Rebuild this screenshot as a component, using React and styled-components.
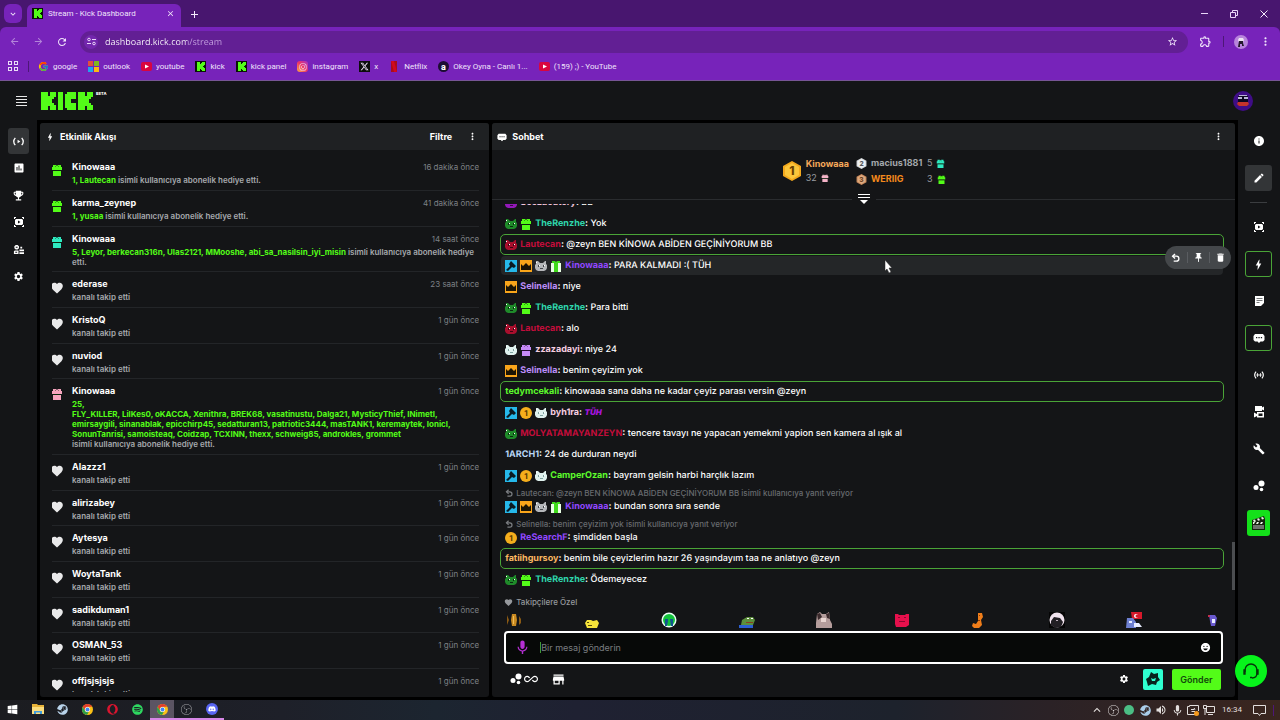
import * as React from 'react'
import styled, { createGlobalStyle, css } from 'styled-components'
import {
	MdAllInclusive,
	MdArrowBack,
	MdArrowForward,
	MdAssessment,
	MdBolt,
	MdBuild,
	MdClose,
	MdDelete,
	MdEdit,
	MdEmojiEmotions,
	MdEmojiEvents,
	MdFavorite,
	MdInfo,
	MdKeyboardArrowDown,
	MdKeyboardArrowUp,
	MdMic,
	MdMoreVert,
	MdOutlineExtension,
	MdPushPin,
	MdRefresh,
	MdSettings,
	MdStarBorder,
	MdStore,
	MdVolumeUp,
} from 'react-icons/md'
import { FaDiscord, FaInstagram, FaOpera, FaSpotify, FaSteam, FaWindows, FaXTwitter } from 'react-icons/fa6'
import { FcGoogle } from 'react-icons/fc'
import { SiObsstudio } from 'react-icons/si'

const GlobalStyle = createGlobalStyle`
	* {
		box-sizing: border-box;
	}
	body {
		margin: 0;
		background: #000;
		font-family: 'Inter', sans-serif;
		color: #fff;
	}
	button {
		padding: 0;
		border: 0;
		background: none;
		color: inherit;
		font-family: inherit;
	}
	a {
		color: inherit;
		text-decoration: none;
	}
	p, h1, h2, h3, ul, ol {
		margin: 0;
		padding: 0;
	}
	ul, ol {
		list-style: none;
	}
	svg {
		display: block;
		flex-shrink: 0;
	}
`

const colors = {
	surface: '#141517',
	raised: '#1f2123',
	green: '#53fc18',
	teal: '#2ee9c0',
	outline: '#4aa437',
}

const noWrap = css`
	white-space: nowrap;
	overflow: hidden;
	text-overflow: ellipsis;
`

const center = css`
	display: flex;
	align-items: center;
	justify-content: center;
`

/**
 * Icons
 */

const Gift = ({ size = 12, color = colors.green, ribbon = 'rgba(0,60,0,0.45)' }) => (
	<svg width={size} height={size} viewBox="0 0 12 12">
		<path fill={color} d="M2 1h3l1 1 1-1h3v2h1v3H1V3h1zM2 7h8v5H2z" />
		<path fill={ribbon} d="M2 6h8v1H2zM4 2h1v1H4zM7 2h1v1H7z" />
	</svg>
)

const BigGift = () => (
	<svg width="12" height="12" viewBox="0 0 12 12">
		<path fill="#e9ffe4" d="M1 3h10v3H1zM1 6h10v6H1z" />
		<path fill="#3fdb1b" d="M2 1h3l1 1 1-1h3v2H8v9H4V3H2z" />
	</svg>
)

const Cat = ({ color, face = '#0b2a10', light = '#ffffff' }) => (
	<svg width="12" height="12" viewBox="0 0 12 12">
		<path fill={color} d="M1 1h2l2 2h3l2-2h1v3l1 1v3l-1 2-2 1H3L1 10 0 8V5l1-1z" />
		<path fill={face} d="M3 5h1v2H3zM8 5h1v2H8zM5 8h3v1H5z" />
		<path fill={light} d="M4 5h1v1H4zM9 5h1v1H9zM1 2h1v1H1z" />
	</svg>
)

const ModBadge = () => (
	<svg width="12" height="12" viewBox="0 0 12 12">
		<path fill="#26b8ea" d="M0 0h12v12H0z" />
		<path fill="#0b1a22" d="M6 1l5 5-2 2-2-1-4 4-2-1 4-4-1-2z" />
	</svg>
)

const CrownBadge = () => (
	<svg width="12" height="12" viewBox="0 0 12 12">
		<path fill="#f9a51a" d="M0 0h12v12H0z" />
		<path fill="#1b1404" d="M1 4l2 2 3-3 3 3 2-2v6H1z" />
	</svg>
)

const CoinBadge = () => (
	<svg width="12" height="12" viewBox="0 0 12 12">
		<circle cx="6" cy="6" r="6" fill="#f5ae1c" />
		<text x="6" y="9" textAnchor="middle" fontSize="8" fontWeight="700" fill="#5a3600">1</text>
	</svg>
)

const RankBadge = ({ size, color, light, dark, rank }) => (
	<svg width={size} height={size} viewBox="0 0 20 20">
		<path fill={color} d="M10 0l9 5v10l-9 5-9-5V5z" />
		<path fill={light} d="M10 2l7 4v8l-7 4-7-4V6z" />
		<text x="10" y="14" textAnchor="middle" fontSize="12" fontWeight="800" fill={dark}>{rank}</text>
	</svg>
)

const Live = ({ dot, size = 12 }) => (
	<svg width={size} height={size} viewBox="0 0 12 12" fill="none" stroke="#fff" strokeWidth="1.4">
		<path d="M2.5 2C.4 4.500.4 7.500 2.500 10M9.500 2c2.100 2.500 2.100 5.500 0 8" />
		{dot ? <path d="M4.400 4c-1 1.500-1 2.500 0 4M7.600 4c1 1.500 1 2.500 0 4" /> : null}
		{dot ? <circle cx="6" cy="6" r="1" fill="#fff" stroke="none" /> : <path d="M5 4l3 2-3 2z" fill="#fff" stroke="none" />}
	</svg>
)

const Clip = () => (
	<svg width="12" height="12" viewBox="0 0 12 12" fill="#fff">
		<path d="M1 1h2v1H2v1H1zM9 1h2v2h-1V2H9zM1 9h1v1h1v1H1zM10 9h1v2H9v-1h1z" />
		<path fillRule="evenodd" d="M3 3h6l1 1v4L9 9H3L2 8V4zM5 4.500v3L7.500 6z" />
	</svg>
)

const Community = () => (
	<svg width="11" height="11" viewBox="0 0 12 12" fill="#fff">
		<path fillRule="evenodd" d="M3 1h2l1.500 1.500v2L5 6H3L1.500 4.500v-2zM3 3v1h2V3z" />
		<path fillRule="evenodd" d="M1 8l1-1h4v4H1zM2.500 8.500v1h2v-1z" />
		<path d="M8 3h2v2H8zM7 6h5v2H7zM7 9h5v2H7z" />
	</svg>
)

const Note = () => (
	<svg width="12" height="12" viewBox="0 0 12 12">
		<path fill="#fff" d="M2 1h9v7l-3 3H2z" />
		<path stroke="#77797b" d="M3.500 3.500h6M3.500 5.500h6M3.500 7.500h3" />
	</svg>
)

const Bubble = ({ size = 12 }) => (
	<svg width={size} height={size} viewBox="0 0 12 12">
		<path fill="#fff" d="M2 2h8l1.500 2v4L10 9.500H7.500L6 11 4.500 9.500H2L.5 8V4z" />
		<path fill="#141517" d="M3 5h1.300v1.300H3zM5.400 5h1.300v1.300H5.400zM7.800 5h1.300v1.300H7.800z" />
	</svg>
)

const Cameras = () => (
	<svg width="12" height="12" viewBox="0 0 12 12" fill="#fff">
		<path d="M2 0h7v1.500L11 .5v4L9 3.500V5H2z" />
		<path fillRule="evenodd" d="M4 6h7v5.500H4V10l-3 1.500V6.500L4 8zM5.500 7.500v2.500h4V7.500z" />
	</svg>
)

const Dots = ({ size = 12 }) => (
	<svg width={size} height={size} viewBox="0 0 12 12" fill="#fff">
		<circle cx="3" cy="7.500" r="2.500" />
		<circle cx="8.500" cy="3.500" r="3" />
		<circle cx="8.500" cy="9.500" r="1.800" />
	</svg>
)

const Clapper = () => (
	<svg width="15" height="15" viewBox="0 0 15 15">
		<path fill="#15220f" d="M1 4l12-4 1 3v11H1z" />
		<path fill="#eaf5e6" d="M2 4l2-.6 1 2-2 .6zM6 2.800l2-.6 1 2-2 .6zM10 1.600l2-.6 1 2-2 .6zM2 6h2l-1 2H2zM6 6h2L7 8H5zM10 6h2l-1 2H9z" />
		<path fill="#6c716c" d="M2 9h11v4H2z" />
	</svg>
)

const Headset = () => (
	<svg width="18" height="18" viewBox="0 0 18 18" fill="none" stroke="#06350a" strokeWidth="1.4">
		<path d="M3 10V8a6 6 0 0 1 12 0v3c0 3-2 5-5 5" />
		<path fill="#06350a" d="M2 8h1v4H2zM15 8h1v4h-1zM8 15.500h2" />
	</svg>
)

const Undo = ({ size = 10, color = '#fff' }) => (
	<svg width={size} height={size} viewBox="0 0 10 10" fill="none" stroke={color} strokeWidth="1.500">
		<path d="M3 9h3a2.700 2.700 0 0 0 0-5.500H2" />
		<path d="M4.500 1L1.800 3.500l2.700 2.500" />
	</svg>
)

const Collapse = () => (
	<svg width="12" height="10" viewBox="0 0 12 10" fill="#fff">
		<path d="M0 0h12v1H0zM0 3h12v1H0zM2 6h8L6 10z" />
	</svg>
)

const KickMark = () => (
	<svg width="11" height="11" viewBox="0 0 11 11">
		<path fill="#0b1208" d="M0 0h11v11H0z" />
		<path fill={colors.green} d="M2 1h3v2h1V2h1V1h3v3H9v1H8v1h1v1h1v3H7V9H6V8H5v2H2z" />
	</svg>
)

const kickBlocks = [
	[0, 0, 7, 18], [6, 4, 5, 10], [9, 2, 4, 5], [9, 11, 4, 5], [9, 0, 6, 5], [9, 13, 6, 5],
	[17, 0, 5, 18],
	[24, 2, 6, 14], [26, 0, 9, 5], [26, 13, 9, 5], [30, 4, 5, 3], [30, 11, 5, 3],
	[37, 0, 7, 18], [43, 4, 5, 10], [46, 2, 4, 5], [46, 11, 4, 5], [46, 0, 6, 5], [46, 13, 6, 5],
]

const KickLogo = () => (
	<svg width="53" height="18" viewBox="0 0 53 18" fill={colors.green} shapeRendering="crispEdges">
		{kickBlocks.map(([x, y, w, h]) => <rect key={`${x}-${y}`} x={x} y={y} width={w} height={h} />)}
	</svg>
)

const YouTube = () => (
	<svg width="11" height="11" viewBox="0 0 11 11">
		<rect y="1" width="11" height="9" rx="2" fill="#d9053f" />
		<path fill="#fff" d="M4 3.500l4 2-4 2z" />
	</svg>
)

const Microsoft = () => (
	<svg width="11" height="11" viewBox="0 0 11 11">
		<path fill="#e0503c" d="M0 0h5v5H0z" />
		<path fill="#80b91c" d="M6 0h5v5H6z" />
		<path fill="#20a3ee" d="M0 6h5v5H0z" />
		<path fill="#fdb813" d="M6 6h5v5H6z" />
	</svg>
)

const Netflix = () => (
	<svg width="11" height="11" viewBox="0 0 11 11">
		<path fill="#a90d1c" d="M2 0h3v11H2zM5 0h3v11H5z" />
		<path fill="#d3091f" d="M2 0h3l3 11H5z" />
	</svg>
)

const Okey = () => (
	<svg width="11" height="11" viewBox="0 0 11 11">
		<circle cx="5.500" cy="5.500" r="5.500" fill="#1c0d33" />
		<text x="5.500" y="9" textAnchor="middle" fontSize="9" fontWeight="800" fill="#fff">a</text>
	</svg>
)

const Chrome = ({ size = 12 }) => (
	<svg width={size} height={size} viewBox="0 0 24 24">
		<circle cx="12" cy="12" r="12" fill="#fbc116" />
		<path fill="#e33b2e" d="M1.600 6A12 12 0 0 1 22.400 6H12a6 6 0 0 0-5.500 8.500z" />
		<path fill="#2ca04b" d="M1.600 6l5.200 9a6 6 0 0 0 8 2.300L11 24A12 12 0 0 1 1.600 6z" />
		<circle cx="12" cy="12" r="5.500" fill="#fff" />
		<circle cx="12" cy="12" r="4.300" fill="#4285f4" />
	</svg>
)

const Folder = () => (
	<svg width="12" height="12" viewBox="0 0 12 12">
		<path fill="#e8b33a" d="M0 1h5l1 1h6v9H0z" />
		<path fill="#fbdd7e" d="M0 4h12v7H0z" />
		<path fill="#3f9bdc" d="M2 8h8v3H8V9.500H4V11H2z" />
	</svg>
)

const TuneIcon = () => (
	<svg width="9" height="9" viewBox="0 0 9 9" fill="none" stroke="#e9d6f8">
		<circle cx="2" cy="2.500" r="1.300" />
		<circle cx="7" cy="6.500" r="1.300" />
		<path d="M5 2.500h4M0 6.500h4" />
	</svg>
)

const GridIcon = () => (
	<svg width="11" height="11" viewBox="0 0 11 11" fill="none" stroke="#eadcf6" shapeRendering="crispEdges">
		<path d="M.5.500h3v3h-3zM6.500.500h3v3h-3zM.5 6.500h3v3h-3zM6.500 6.500h3v3h-3z" />
	</svg>
)

const MenuIcon = () => (
	<svg width="11" height="10" viewBox="0 0 11 10" fill="#e8e8e8" shapeRendering="crispEdges">
		<path d="M0 0h11v1H0zM0 3h11v1H0zM0 6h11v1H0zM0 9h11v1H0z" />
	</svg>
)

const RestoreIcon = () => (
	<svg width="8" height="8" viewBox="0 0 8 8" fill="none" stroke="#e9d6f8">
		<path d="M.5 2.500h5v5h-5zM2.500 2V.5h5v5H6" />
	</svg>
)

const NetworkIcon = () => (
	<svg width="12" height="12" viewBox="0 0 12 12" fill="none" stroke="#e2dedd">
		<path d="M3.500 2.500h8v6h-8zM5 10.500h5M.5 1.500h3v3h-3zM2 5v6" />
	</svg>
)

const CaptureIcon = () => (
	<svg width="12" height="12" viewBox="0 0 12 12" fill="none" stroke="#e2dedd">
		<path d="M8 10.500H.5v-8h2v-1h9V7" />
		<path d="M4 5.500h3.500M7 4l1 1.500M8 7.500H4.500" />
		<circle cx="9.500" cy="9.500" r="2.500" fill="#f59a1e" stroke="none" />
	</svg>
)

const NotifyIcon = () => (
	<svg width="13" height="13" viewBox="0 0 13 13" fill="none" stroke="#e2dedd">
		<path d="M.5 1.500h12v8H8l-1.500 2L5 9.500H.5z" />
	</svg>
)

const Star = () => (
	<svg width="14" height="14" viewBox="0 0 14 14">
		<path fill="#07231d" d="M5 0l3 2 4-1v4l2 3-3 2-1 3-4-1-4 2-1-4-1-3 3-2z" />
		<path fill="#2fffd0" d="M5 6l2 1 3-1-1 3H6z" />
	</svg>
)

const Pointer = () => (
	<svg width="9" height="13" viewBox="0 0 9 13">
		<path fill="#fff" stroke="#222" strokeWidth=".5" d="M1 0l7 8H5l2 4-2 1-2-4-2 2z" />
	</svg>
)

/**
 * Emotes above the message box
 */

const emotes = [
	<><path fill="#c98a21" d="M6 2h4l1 6-1 6H6L5 8z" /><path fill="#f1bd58" d="M7 4h1v8H7z" /><path fill="#8b5a14" d="M1 3l2 5-2 5zM13 4l2 3v4l-2 2z" /></>,
	<><path fill="#f6e33a" d="M1 11l2-3h4l2 1 4-1 2 3-2 5H3z" /><path fill="#57490a" d="M3 10h2v1H3zM4 13h4v1H4z" /></>,
	<><circle cx="8" cy="8" r="7.500" fill="#e9fff4" /><circle cx="8" cy="8" r="6" fill="#12c23c" /><path fill="#12548f" d="M4 7h3v2l-1 5H4zM9 7h3v7h-2z" /></>,
	<><path fill="#5c8f3c" d="M3 8l5-3h6l2 3-2 5H2z" /><path fill="#fff" d="M8 6h2v1H8zM12 6h2v1h-2z" /><path fill="#8a3d22" d="M7 10h7v1H7z" /><path fill="#2c5fd2" d="M0 13h14v3H0z" /></>,
	<><path fill="#b59d9c" d="M1 2l3-2 2 2h4l3-2 1 8 2 4v4H0v-5z" /><path fill="#3b2a2c" d="M1 2l3-1 2 4-4 3zM10 2l3-1 1 6-3-1z" /><path fill="#e9d5d1" d="M5 6h5v4H5z" /></>,
	<><path fill="#e6104c" d="M1 2h3l1 1h6l1-1h3v11l-3 2H2l-1-3z" /><path fill="#8d0630" d="M4 5h2v1H4zM10 5h2v1h-2zM5 9h6v1H5z" /></>,
	<><path fill="#ef7d1a" d="M7 1h4l1 4-2 3 1 5-3 3H3l-2-2 1-3 3 1 2-3z" /><path fill="#8e3c06" d="M8 3h1v1H8zM7 8h2v1H7z" /></>,
	<><path fill="#050505" d="M0 0h16v16H0z" /><circle cx="8" cy="8" r="7.500" fill="#f0e3ee" /><path fill="#221f24" d="M2 9l3-4 6 1 3 4-2 5-6 1-4-3z" /><path fill="#b7aab6" d="M7 8h2v1H7z" /></>,
	<><path fill="#d7192b" d="M5 0h11v7H6z" /><circle cx="10" cy="4" r="2" fill="#fff" /><circle cx="11" cy="4" r="1.500" fill="#d7192b" /><path fill="#6d7fd0" d="M1 6h6l3 4v6H0z" /><path fill="#e8ecff" d="M3 9h3v2H3zM8 11h5l3 4H8z" /></>,
	<><path fill="#6a5ad0" d="M5 3h6l2 3-1 4-1 4H7L6 9z" /><path fill="#e9ecff" d="M8 7h3v4H8z" /><path fill="#c32f4e" d="M4 3h2v2H4z" /></>,
]

/**
 * Browser
 */

const Page = styled.div`
	display: flex;
	flex-direction: column;
	height: 100vh;
	overflow: hidden;
`

const Browser = styled.header`
	background: #48166f;
	color: #f0e4fa;
	font-family: 'Roboto', sans-serif;
`

const TabStrip = styled.div`
	display: flex;
	align-items: center;
	height: 27px;
	padding: 4px 11px 0 4px;
`

const TabSearch = styled.button`
	${center};
	width: 18px;
	height: 19px;
	margin: 0 5px 4px 0;
	border-radius: 6px;
	background: #7723ba;
`

const Tab = styled.div`
	display: flex;
	align-items: center;
	gap: 5px;
	width: 154px;
	height: 23px;
	padding: 0 6px 4px 5px;
	border-radius: 6px 6px 0 0;
	background: #7723ba;
	font-size: 8px;
	line-height: 12px;
`

const TabTitle = styled.span`
	${noWrap};
	flex: 1;
`

const BarButton = styled.button`
	${center};
	width: ${p => p.$width || 24}px;
	height: 20px;
	opacity: ${p => (p.$dim ? 0.5 : 1)};
`

const NewTab = styled(BarButton)`
	margin-left: 1px;
	padding-bottom: 3px;
`

const WindowControls = styled.div`
	display: flex;
	gap: 6px;
	margin-left: auto;
	padding-bottom: 3px;
	margin-right: -7px;
`

const AddressBar = styled.div`
	display: flex;
	align-items: center;
	height: 28px;
	padding: 1px 3px 0 2px;
	border-radius: 6px 6px 0 0;
	background: #7723ba;
`

const Omnibox = styled.div`
	display: flex;
	align-items: center;
	gap: 7px;
	flex: 1;
	height: 22px;
	margin: 0 6px;
	padding: 0 4px;
	border-radius: 11px;
	background: #621f94;
`

const SiteInfo = styled.button`
	${center};
	width: 14px;
	height: 14px;
	border-radius: 7px;
	background: #7327ad;
`

const UrlInput = styled.input`
	flex: 1;
	padding: 0;
	border: 0;
	outline: 0;
	background: linear-gradient(90deg, #fff 82px, #c6a3e2 82px);
	background-clip: text;
	color: transparent;
	font-family: 'Open Sans', sans-serif;
	font-size: 9px;
	line-height: 14px;
	text-rendering: geometricPrecision;
`

const Separator = styled.span`
	width: 1px;
	height: 11px;
	background: #4d1777;
	margin: 0 ${p => p.$space || 10}px;
`

const Profile = styled.button`
	${center};
	width: 14px;
	height: 14px;
	margin: 0 5px 0 3px;
	border-radius: 7px;
	background: #b884dc;
`

const Bookmarks = styled.nav`
	display: flex;
	align-items: center;
	height: 26px;
	padding: 0 0 2px 8px;
	border-bottom: 1px solid #775595;
	background: #7723ba;
	font-size: 8px;
	line-height: 12px;
`

const Bookmark = styled.a`
	display: flex;
	align-items: center;
	gap: 4px;
	margin-right: 11px;
	white-space: nowrap;
`

const XMark = styled.span`
	${center};
	width: 11px;
	height: 11px;
	background: #0c0c0c;
`

const InstagramMark = styled(XMark)`
	border-radius: 3px;
	background: linear-gradient(45deg, #fdb03f, #ee3264 50%, #a033c9);
`

/**
 * Dashboard shell
 */

const TopBar = styled.div`
	display: flex;
	align-items: center;
	height: 39px;
	padding: 0 27px 0 16px;
	background: ${colors.surface};
`

const Logo = styled.a`
	display: flex;
	align-items: flex-start;
	gap: 2px;
	margin-left: 14px;
`

const Beta = styled.span`
	font-size: 4px;
	font-weight: 800;
	line-height: 4px;
`

const Avatar = styled.button`
	${center};
	width: 20px;
	height: 20px;
	margin-left: auto;
	border-radius: 10px;
	background: #3f0d86;
`

const Workspace = styled.div`
	display: grid;
	grid-template-columns: 37px 450fr 744fr 42px;
	column-gap: 3px;
	flex: 1;
	min-height: 0;
`

const Rail = styled.nav`
	display: flex;
	flex-direction: column;
	align-items: center;
	gap: ${p => p.$gap}px;
	padding-top: 8px;
	background: ${colors.surface};
`

const RailButton = styled.button`
	${center};
	width: ${p => p.$width}px;
	height: 26px;
	border-radius: 3px;
	border: 1px solid ${p => (p.$outlined ? colors.outline : 'transparent')};
	background: ${p => (p.$active ? '#333537' : 'transparent')};
`

const RailLine = styled.hr`
	width: 17px;
	height: 1px;
	margin: 0;
	border: 0;
	background: #3b3d40;
`

const ClipButton = styled(RailButton)`
	border: 0;
	background: #14e01a;
`

const Panel = styled.section`
	display: flex;
	flex-direction: column;
	min-width: 0;
	min-height: 0;
	margin: 3px 0;
	border-radius: 3px;
	overflow: hidden;
	background: ${colors.surface};
`

const PanelHeader = styled.div`
	display: flex;
	align-items: center;
	gap: 5px;
	height: 27px;
	padding: 0 11px 0 5px;
	background: ${colors.raised};
`

const PanelTitle = styled.h2`
	flex: 1;
	font-size: 9px;
	font-weight: 700;
	line-height: 14px;
`

const FilterButton = styled.button`
	margin-right: 10px;
	font-size: 9px;
	font-weight: 700;
	line-height: 14px;
`

/**
 * Activity feed
 */

const Feed = styled.ul`
	flex: 1;
	min-height: 0;
	margin: 5px 10px 5px 12px;
	overflow: hidden;
`

const FeedRow = styled.li`
	display: flex;
	gap: 10px;
	padding: 5px 0;
	border-bottom: 1px solid #232528;

	&:nth-child(3n) {
		padding-bottom: 4px;
	}
`

const FeedIcon = styled.span`
	display: flex;
	justify-content: center;
	width: 10px;
	padding-top: 4px;
`

const FeedBody = styled.div`
	flex: 1;
	min-width: 0;
`

const FeedTop = styled.div`
	display: flex;
	justify-content: space-between;
	margin-bottom: 1px;
	line-height: 14px;
`

const FeedName = styled.h3`
	font-size: 9px;
	font-weight: 700;
`

const FeedTime = styled.span`
	font-size: 8px;
	color: #7d8085;
`

const FeedText = styled.p`
	font-size: 8px;
	font-weight: 600;
	line-height: 10px;
	color: #a6a9ad;
`

const Names = styled.b`
	display: ${p => (p.$block ? 'block' : 'inline')};
	font-weight: 700;
	color: ${colors.green};
`

const follow = (name, time = '1 gün önce') => ({ name, time })

const activities = [
	{ name: 'Kinowaaa', time: '16 dakika önce', gift: colors.green, names: '1, Lautecan' },
	{ name: 'karma_zeynep', time: '41 dakika önce', gift: colors.green, names: '1, yusaa' },
	{ name: 'Kinowaaa', time: '14 saat önce', gift: colors.teal, names: '5, Leyor, berkecan316n, Ulas2121, MMooshe, abi_sa_nasilsin_iyi_misin' },
	follow('ederase', '23 saat önce'),
	follow('KristoQ'),
	follow('nuviod'),
	{
		name: 'Kinowaaa',
		time: '1 gün önce',
		gift: '#f5a3bd',
		count: '25,',
		names: 'FLY_KILLER, LilKes0, oKACCA, Xenithra, BREK68, vasatinustu, Dalga21, MysticyThief, INimetl, emirsaygili, sinanablak, epicchirp45, sedatturan13, patriotic3444, masTANK1, keremaytek, Ionicl, SonunTanrisi, samoisteaq, Coidzap, TCXINN, thexx, schweig85, androkles, grommet',
	},
	follow('Alazzz1'),
	follow('alirizabey'),
	follow('Aytesya'),
	follow('WoytaTank'),
	follow('sadikduman1'),
	follow('OSMAN_53'),
	follow('offjsjsjsjs'),
]

const Activity = ({ item }) => (
	<FeedRow>
		<FeedIcon>
			{item.gift ? <Gift size={12} color={item.gift} /> : <MdFavorite size={14} color="#e9e9ea" />}
		</FeedIcon>
		<FeedBody>
			<FeedTop>
				<FeedName>{item.name}</FeedName>
				<FeedTime>{item.time}</FeedTime>
			</FeedTop>
			{item.gift ? (
				<FeedText>
					{item.count ? <Names $block>{item.count}</Names> : null}
					<Names $block={!!item.count}>{item.names}</Names> isimli kullanıcıya abonelik hediye etti.
				</FeedText>
			) : (
				<FeedText>kanalı takip etti</FeedText>
			)}
		</FeedBody>
	</FeedRow>
)

/**
 * Chat
 */

const Leaders = styled.div`
	display: flex;
	align-items: center;
	justify-content: center;
	gap: 4px;
	height: 44px;
	padding-bottom: 2px;
	line-height: 14px;
	font-size: 9px;
	color: #9a9da1;
`

const LeaderColumn = styled.div`
	margin-right: ${p => p.$space || 0}px;
`

const LeaderLine = styled.div`
	display: flex;
	align-items: center;
	gap: 4px;
	height: ${p => p.$height || 14}px;
`

const LeaderName = styled.b`
	min-width: ${p => p.$width || 0}px;
	font-weight: 700;
	color: ${p => p.$color};
`

const Divider = styled.div`
	display: flex;
	align-items: center;
	gap: 6px;
	height: 10px;

	&::before,
	&::after {
		content: '';
		flex: 1;
		height: 1px;
		background: #2a2c2f;
	}
`

const Messages = styled.ol`
	position: relative;
	display: flex;
	flex-direction: column;
	justify-content: flex-end;
	flex: 1;
	min-height: 0;
	padding: 0 11px 0 8px;
	overflow: hidden;

	&::after {
		content: '';
		position: absolute;
		right: 0;
		bottom: 0;
		width: 3px;
		height: 48px;
		background: #4b4d50;
	}
`

const MessageRow = styled.li`
	position: relative;
	flex-shrink: 0;
	padding: 1px 4px;
	border: 1px solid ${p => (p.$mention ? colors.outline : 'transparent')};
	border-radius: 5px;
	background: ${p => (p.$hovered ? '#242628' : 'transparent')};
	background-clip: padding-box;
`

const Reply = styled.div`
	display: flex;
	align-items: center;
	gap: 3px;
	font-size: 8px;
	font-weight: 500;
	line-height: 10px;
	color: #686b6f;
`

const MessageLine = styled.div`
	display: flex;
	align-items: center;
	gap: 3px;
	font-size: 9px;
	font-weight: 500;
	line-height: 17px;
	text-rendering: geometricPrecision;
`

const User = styled.b`
	font-weight: 700;
	color: ${p => p.$color};
`

const WordEmote = styled.i`
	font-size: 8px;
	font-weight: 900;
	color: #a514dd;
`

const Actions = styled.div`
	${center};
	position: absolute;
	right: -8px;
	top: -10px;
	z-index: 1;
	height: 23px;
	border-radius: 12px;
	background: #44474a;
`

const ActionButton = styled.button`
	${center};
	width: 22px;
	height: 11px;

	& + & {
		border-left: 1px solid #5a5d61;
	}
`

const PointerSpot = styled.span`
	position: absolute;
	left: 53%;
	top: 4px;
`

const badges = {
	mod: <ModBadge />,
	crown: <CrownBadge />,
	coin: <CoinBadge />,
	green: <Cat color="#1f8a2a" />,
	red: <Cat color="#a80f2d" face="#3a0410" />,
	white: <Cat color="#dff1ee" face="#7fa3a0" />,
	gray: <Cat color="#b5b7ba" face="#44474c" />,
	purple: <Cat color="#9319b8" face="#3a0549" />,
	gift: <Gift size={12} />,
	lilac: <Gift size={12} color="#c58af5" ribbon="rgba(60,0,90,0.4)" />,
	bigGift: <BigGift />,
}

const messages = [
	{ badges: ['purple'], user: 'SeeLaeutery', color: '#f3c6dd', text: 'BB' },
	{ badges: ['green', 'gift'], user: 'TheRenzhe', color: '#2fd6ac', text: 'Yok' },
	{ badges: ['red'], user: 'Lautecan', color: '#c30d3b', text: '@zeyn BEN KİNOWA ABİDEN GEÇİNİYORUM BB', mention: true },
	{ badges: ['mod', 'crown', 'gray', 'bigGift'], user: 'Kinowaaa', color: '#9147ff', text: 'PARA KALMADI :( TÜH', hovered: true },
	{ badges: ['crown'], user: 'Selinella', color: '#bb8df7', text: 'niye' },
	{ badges: ['green', 'gift'], user: 'TheRenzhe', color: '#2fd6ac', text: 'Para bitti' },
	{ badges: ['red'], user: 'Lautecan', color: '#c30d3b', text: 'alo' },
	{ badges: ['white', 'lilac'], user: 'zzazadayi', color: '#f7cfe2', text: 'niye 24' },
	{ badges: ['crown'], user: 'Selinella', color: '#bb8df7', text: 'benim çeyizim yok' },
	{ badges: [], user: 'tedymcekali', color: '#5dfa2c', text: 'kinowaaa sana daha ne kadar çeyiz parası versin @zeyn', mention: true },
	{ badges: ['mod', 'coin', 'white'], user: 'byh1ra', color: '#f7cfe2', emote: 'TÜH' },
	{ badges: ['green'], user: 'MOLYATAMAYANZEYN', color: '#c30d3b', text: 'tencere tavayı ne yapacan yemekmi yapion sen kamera al ışık al' },
	{ badges: [], user: '1ARCH1', color: '#b9d6f6', text: '24 de durduran neydi' },
	{ badges: ['mod', 'coin', 'white'], user: 'CamperOzan', color: '#5dfa2c', text: 'bayram gelsin harbi harçlık lazım' },
	{
		badges: ['mod', 'crown', 'gray', 'bigGift'],
		user: 'Kinowaaa',
		color: '#9147ff',
		text: 'bundan sonra sıra sende',
		reply: 'Lautecan: @zeyn BEN KİNOWA ABİDEN GEÇİNİYORUM BB isimli kullanıcıya yanıt veriyor',
	},
	{
		badges: ['coin'],
		user: 'ReSearchF',
		color: '#9147ff',
		text: 'şimdiden başla',
		reply: 'Selinella: benim çeyizim yok isimli kullanıcıya yanıt veriyor',
	},
	{ badges: [], user: 'fatiihgursoy', color: '#fbb862', text: 'benim bile çeyizlerim hazır 26 yaşındayım taa ne anlatıyo @zeyn', mention: true },
	{ badges: ['green', 'gift'], user: 'TheRenzhe', color: '#2fd6ac', text: 'Ödemeyecez' },
]

const Message = ({ item }) => (
	<MessageRow $mention={item.mention} $hovered={item.hovered}>
		{item.reply ? (
			<Reply>
				<Undo size={8} color="#7b7e82" />
				{item.reply}
			</Reply>
		) : null}
		<MessageLine>
			{item.badges.map(badge => <React.Fragment key={badge}>{badges[badge]}</React.Fragment>)}
			<span>
				<User $color={item.color}>{item.user}</User>
				<b>:</b> {item.emote ? <WordEmote>{item.emote}</WordEmote> : item.text}
			</span>
		</MessageLine>
		{item.hovered ? (
			<React.Fragment>
				<PointerSpot><Pointer /></PointerSpot>
				<Actions>
					<ActionButton aria-label="Yanıtla"><Undo size={9} /></ActionButton>
					<ActionButton aria-label="Sabitle"><MdPushPin size={11} /></ActionButton>
					<ActionButton aria-label="Sil"><MdDelete size={11} /></ActionButton>
				</Actions>
			</React.Fragment>
		) : null}
	</MessageRow>
)

const ChatMode = styled.div`
	display: flex;
	align-items: center;
	gap: 3px;
	height: 22px;
	padding: 2px 12px 0;
	font-size: 8px;
	font-weight: 500;
	line-height: 12px;
	color: #96999d;
`

const EmoteRow = styled.div`
	display: flex;
	justify-content: space-between;
	height: 17px;
	padding: 0 15px 0 14px;
`

const Composer = styled.div`
	display: flex;
	align-items: center;
	height: 33px;
	margin: 2px 12px 0;
	padding: 0 10px 0 8px;
	border: 2px solid #fff;
	border-radius: 4px;
	background: #070908;
`

const Caret = styled.span`
	width: 1px;
	height: 11px;
	margin-left: 9px;
	background: #3f9a35;
`

const MessageInput = styled.input`
	flex: 1;
	padding: 0;
	border: 0;
	outline: 0;
	background: none;
	color: #fff;
	font-family: inherit;
	font-size: 9px;
	line-height: 14px;

	&::placeholder {
		color: #7b7e81;
		opacity: 1;
	}
`

const ChatFooter = styled.div`
	display: flex;
	align-items: center;
	height: 33px;
	padding: 0 14px 3px 18px;
`

const FooterSpace = styled.span`
	flex: 1;
`

const IconButton = styled.button`
	${center};
	gap: 2px;
	margin-right: ${p => p.$space || 0}px;
`

const StarButton = styled.button`
	${center};
	width: 20px;
	height: 21px;
	margin-right: 9px;
	border-radius: 2px;
	background: #2fffd0;
`

const SendButton = styled.button`
	width: 49px;
	height: 21px;
	border-radius: 2px;
	background: ${colors.green};
	color: #12490b;
	font-size: 9px;
	font-weight: 600;
`

const HelpButton = styled.button`
	${center};
	position: fixed;
	right: 13px;
	bottom: 33px;
	width: 32px;
	height: 32px;
	border-radius: 16px;
	background: #07f41b;
`

/**
 * Taskbar
 */

const Taskbar = styled.footer`
	display: flex;
	align-items: center;
	height: 20px;
	background: linear-gradient(90deg, #1b1c20 0, #1e2029 22%, #1c2530 34%, #1f2132 45%, #1d222c 70%, #2b2226 82%, #3a261f 100%);
`

const TaskButton = styled.button`
	${center};
	width: ${p => (p.$active ? 24 : 25)}px;
	height: 20px;
	background: ${p => (p.$active ? '#5b5463' : 'transparent')};
	border-bottom: 2px solid ${p => (p.$open ? '#d787e6' : 'transparent')};
	background-clip: padding-box;
`

const Tray = styled.div`
	display: flex;
	align-items: center;
	margin-left: auto;
	color: #e2dedd;
`

const TrayItem = styled.button`
	${center};
	width: 16px;
	height: 20px;
`

const StatusDot = styled.span`
	width: 10px;
	height: 10px;
	border-radius: 5px;
	background: #4bbd84;
`

const Clock = styled.time`
	margin: 0 9px 0 5px;
	font-family: 'Roboto', sans-serif;
	font-size: 8px;
	line-height: 12px;
`

const bookmarks = [
	['google', <FcGoogle size={11} />],
	['outlook', <Microsoft />],
	['youtube', <YouTube />],
	['kick', <KickMark />],
	['kick panel', <KickMark />],
	['instagram', <InstagramMark><FaInstagram size={8} /></InstagramMark>],
	['x', <XMark><FaXTwitter size={9} /></XMark>],
	['Netflix', <Netflix />],
	['Okey Oyna - Canlı 1...', <Okey />],
	['(159) ;) - YouTube', <YouTube />],
]

const leftRail = [
	['Yayın', <Live size={11} />],
	['İstatistik', <MdAssessment size={12} />],
	['Başarılar', <MdEmojiEvents size={13} />],
	['Klipler', <Clip />],
	['Topluluk', <Community />],
	['Ayarlar', <MdSettings size={11} />],
]

const rightRail = [
	['Klip', <Clip />],
	['Etkinlik', <MdBolt size={13} />, true],
	['Notlar', <Note />],
	['Sohbet', <Bubble />, true],
	['Canlı', <Live dot size={10} />],
	['Kameralar', <Cameras />],
	['Araçlar', <MdBuild size={12} />],
	['Puanlar', <Dots />],
]

const App = () => (
	<Page>
		<GlobalStyle />
		<Browser>
			<TabStrip>
				<TabSearch aria-label="Sekme ara"><MdKeyboardArrowDown size={10} /></TabSearch>
				<Tab>
					<KickMark />
					<TabTitle>Stream - Kick Dashboard</TabTitle>
					<MdClose size={9} />
				</Tab>
				<NewTab aria-label="Yeni sekme">
					<svg width="9" height="9" viewBox="0 0 9 9" stroke="#f4eafc"><path d="M4.500 1v7M1 4.500h7" /></svg>
				</NewTab>
				<WindowControls>
					<BarButton aria-label="Küçült">
						<svg width="7" height="2" viewBox="0 0 7 2"><path fill="#e9d6f8" d="M0 0h7v1H0z" /></svg>
					</BarButton>
					<BarButton aria-label="Geri yükle"><RestoreIcon /></BarButton>
					<BarButton aria-label="Kapat">
						<svg width="8" height="8" viewBox="0 0 8 8" stroke="#f4eafc"><path d="M.5.500l7 7M7.500.500l-7 7" /></svg>
					</BarButton>
				</WindowControls>
			</TabStrip>
			<AddressBar>
				<BarButton $dim aria-label="Geri"><MdArrowBack size={11} /></BarButton>
				<BarButton $dim aria-label="İleri"><MdArrowForward size={11} /></BarButton>
				<BarButton aria-label="Yenile"><MdRefresh size={12} /></BarButton>
				<Omnibox>
					<SiteInfo aria-label="Site bilgisi"><TuneIcon /></SiteInfo>
					<UrlInput aria-label="Adres" defaultValue="dashboard.kick.com/stream" />
					<BarButton aria-label="Yer işareti"><MdStarBorder size={11} /></BarButton>
				</Omnibox>
				<BarButton $width={22} aria-label="Uzantılar"><MdOutlineExtension size={13} /></BarButton>
				<Separator $space={7} />
				<Profile aria-label="Profil">
					<svg width="8" height="10" viewBox="0 0 8 10">
						<path fill="#efe4f5" d="M2 1h4l1 2-1 2H2L1 3z" />
						<path fill="#24192d" d="M2 4h4v2l1 3H5V7H3v3H1z" />
					</svg>
				</Profile>
				<BarButton aria-label="Menü"><MdMoreVert size={13} /></BarButton>
			</AddressBar>
			<Bookmarks>
				<GridIcon />
				<Separator $space={9} />
				{bookmarks.map(([label, icon]) => (
					<Bookmark key={label} href="#">
						{icon}
						{label}
					</Bookmark>
				))}
			</Bookmarks>
		</Browser>

		<TopBar>
			<button aria-label="Menü"><MenuIcon /></button>
			<Logo href="#" aria-label="Kick">
				<KickLogo />
				<Beta>BETA</Beta>
			</Logo>
			<Avatar aria-label="Hesap">
				<svg width="12" height="12" viewBox="0 0 12 12">
					<path fill="#0b0720" d="M1 1h10v6H1z" />
					<path fill="#b9b4d6" d="M1 2h4v2H1zM7 2h4v2H7zM2 0h8v1H2z" />
					<path fill="#c4342b" d="M1 7h10l1 2-2 2H2L0 9z" />
				</svg>
			</Avatar>
		</TopBar>

		<Workspace>
			<Rail $gap={1}>
				{leftRail.map(([label, icon], i) => (
					<RailButton key={label} $width={21} $active={i === 0} aria-label={label}>{icon}</RailButton>
				))}
			</Rail>

			<Panel>
				<PanelHeader>
					<MdBolt size={10} />
					<PanelTitle>Etkinlik Akışı</PanelTitle>
					<FilterButton>Filtre</FilterButton>
					<button aria-label="Seçenekler"><MdMoreVert size={11} /></button>
				</PanelHeader>
				<Feed>
					{activities.map((item, i) => <Activity key={i} item={item} />)}
				</Feed>
			</Panel>

			<Panel>
				<PanelHeader>
					<Bubble size={10} />
					<PanelTitle>Sohbet</PanelTitle>
					<button aria-label="Seçenekler"><MdMoreVert size={11} /></button>
				</PanelHeader>
				<Leaders>
					<RankBadge size={20} color="#f3a81d" light="#fcc63b" dark="#6b3f00" rank="1" />
					<LeaderColumn $space={3}>
						<LeaderLine><LeaderName $color="#f5a85a">Kinowaaa</LeaderName></LeaderLine>
						<LeaderLine>32 <Gift size={8} color="#f5b3c8" /></LeaderLine>
					</LeaderColumn>
					<LeaderColumn>
						<LeaderLine $height={16}>
							<RankBadge size={11} color="#d5d8db" light="#eef0f2" dark="#55585c" rank="2" />
							<LeaderName $color="#a3a7ab" $width={52}>macius1881</LeaderName>
							5 <Gift size={9} color={colors.teal} />
						</LeaderLine>
						<LeaderLine $height={16}>
							<RankBadge size={11} color="#c98a5c" light="#dda97f" dark="#6b3f1d" rank="3" />
							<LeaderName $color="#f58a1c" $width={52}>WERIIG</LeaderName>
							3 <Gift size={9} />
						</LeaderLine>
					</LeaderColumn>
				</Leaders>
				<Divider><Collapse /></Divider>
				<Messages>
					{messages.map((item, i) => <Message key={i} item={item} />)}
				</Messages>
				<ChatMode>
					<MdFavorite size={9} />
					Takipçilere Özel
				</ChatMode>
				<EmoteRow>
					{emotes.map((drawing, i) => (
						<svg key={i} width="16" height="16" viewBox="0 0 16 16">{drawing}</svg>
					))}
				</EmoteRow>
				<Composer>
					<MdMic size={17} color="#b52fd4" />
					<Caret />
					<MessageInput aria-label="Mesaj" placeholder="Bir mesaj gönderin" />
					<IconButton aria-label="Emoji"><MdEmojiEmotions size={11} /></IconButton>
				</Composer>
				<ChatFooter>
					<IconButton $space={13} aria-label="Puanlar">
						<Dots />
						<MdAllInclusive size={14} />
					</IconButton>
					<IconButton aria-label="Mağaza"><MdStore size={15} /></IconButton>
					<FooterSpace />
					<IconButton $space={14} aria-label="Sohbet ayarları"><MdSettings size={10} /></IconButton>
					<StarButton aria-label="Özel"><Star /></StarButton>
					<SendButton>Gönder</SendButton>
				</ChatFooter>
			</Panel>

			<Rail $gap={11}>
				<RailButton $width={27} aria-label="Bilgi"><MdInfo size={12} /></RailButton>
				<RailButton $width={27} $active aria-label="Düzenle"><MdEdit size={12} /></RailButton>
				<RailLine />
				{rightRail.map(([label, icon, outlined]) => (
					<RailButton key={label} $width={27} $outlined={outlined} aria-label={label}>{icon}</RailButton>
				))}
				<ClipButton $width={23} aria-label="Klip oluştur"><Clapper /></ClipButton>
			</Rail>
		</Workspace>
		<HelpButton aria-label="Destek"><Headset /></HelpButton>

		<Taskbar>
			<TaskButton aria-label="Başlat"><FaWindows size={11} /></TaskButton>
			<TaskButton aria-label="Dosyalar"><Folder /></TaskButton>
			<TaskButton aria-label="Steam"><FaSteam size={11} color="#b9d3ea" /></TaskButton>
			<TaskButton aria-label="Chrome"><Chrome size={11} /></TaskButton>
			<TaskButton aria-label="Opera"><FaOpera size={11} color="#d9152f" /></TaskButton>
			<TaskButton aria-label="Spotify"><FaSpotify size={11} color="#2ed760" /></TaskButton>
			<TaskButton $active $open aria-label="Chrome penceresi"><Chrome size={11} /></TaskButton>
			<TaskButton $open aria-label="OBS"><SiObsstudio size={11} color="#a5a6aa" /></TaskButton>
			<TaskButton $open aria-label="Discord">
				<svg width="12" height="12" viewBox="0 0 12 12"><circle cx="6" cy="6" r="6" fill="#5865f2" /><FaDiscord x={2} y={2} size={8} color="#fff" /></svg>
			</TaskButton>
			<Tray>
				<TrayItem aria-label="Gizli simgeler"><MdKeyboardArrowUp size={14} /></TrayItem>
				<TrayItem aria-label="OBS"><SiObsstudio size={11} /></TrayItem>
				<TrayItem aria-label="Durum"><StatusDot /></TrayItem>
				<TrayItem aria-label="Steam"><FaSteam size={11} color="#a9cdea" /></TrayItem>
				<TrayItem aria-label="Ses"><MdVolumeUp size={12} /></TrayItem>
				<TrayItem aria-label="Mikrofon"><MdMic size={13} /></TrayItem>
				<TrayItem aria-label="Yakalama"><CaptureIcon /></TrayItem>
				<TrayItem aria-label="Ağ"><NetworkIcon /></TrayItem>
				<Clock>16:34</Clock>
				<TrayItem aria-label="Bildirimler"><NotifyIcon /></TrayItem>
				<Separator $space={6} />
			</Tray>
		</Taskbar>
	</Page>
)

export default App
